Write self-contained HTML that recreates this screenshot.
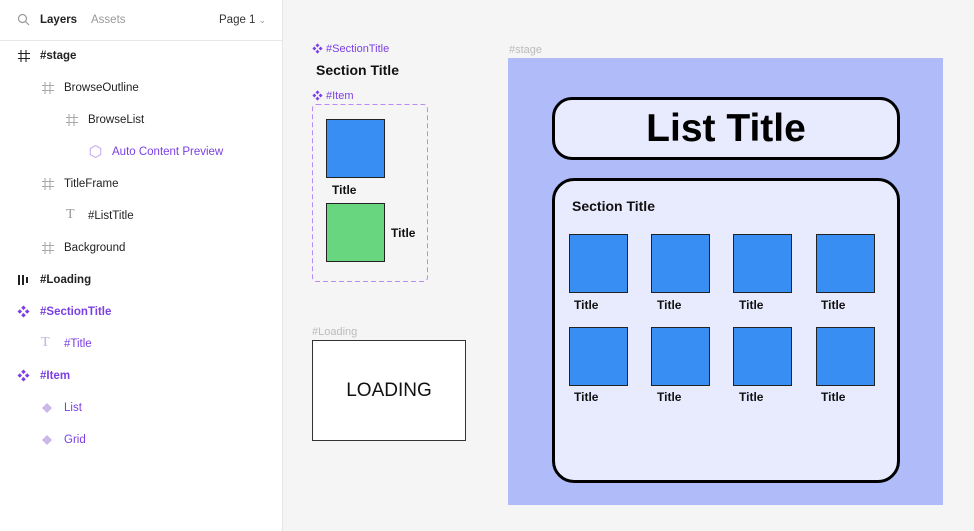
<!DOCTYPE html>
<html><head><style>
*{margin:0;padding:0;box-sizing:border-box}
body{width:974px;height:531px;overflow:hidden;background:#f5f5f5;font-family:"Liberation Sans",sans-serif;position:relative}
.side{position:absolute;left:0;top:0;width:283px;height:531px;background:#fff;border-right:1px solid #e6e6e6}
.hdr{height:41px;border-bottom:1px solid #e6e6e6;position:relative;font-size:11.5px}
.a{position:absolute;white-space:nowrap}
.row{position:absolute;font-size:11.5px;white-space:nowrap;color:#222}
.b{font-weight:bold}
.p{color:#7b3fe4}
.ic{position:absolute;font-size:14px;color:#999}
.sq{position:absolute;width:59px;height:59px;background:#388ef2;border:1px solid #222}
.t{position:absolute;font-size:12px;font-weight:bold;color:#111}
</style></head><body>
<svg width="0" height="0" style="position:absolute"><defs>
<g id="hash"><path d="M4 1v12M9 1v12M1 4.5h12M1 9.5h12" fill="none" stroke-width="1.1"/></g>
<g id="comp"><path d="M6.5 0.5l2.3 2.3-2.3 2.3-2.3-2.3zM6.5 7.9l2.3 2.3-2.3 2.3-2.3-2.3zM2.8 4.2l2.3 2.3-2.3 2.3-2.3-2.3zM10.2 4.2l2.3 2.3-2.3 2.3-2.3-2.3z" fill="#7b3fe4"/></g>
</defs></svg>
<div class="side">
<div class="hdr">
<svg class="a" style="left:17px;top:13px" width="13" height="13" viewBox="0 0 13 13"><circle cx="5.5" cy="5.5" r="4" fill="none" stroke="#999" stroke-width="1.2"/><line x1="8.5" y1="8.5" x2="12" y2="12" stroke="#999" stroke-width="1.2"/></svg>
<span class="a b" style="left:40px;top:14px;color:#222">Layers</span>
<span class="a" style="left:91px;top:14px;color:#999">Assets</span>
<span class="a" style="left:219px;top:14px;color:#333">Page 1 <span style="color:#999;font-size:9px">&#8964;</span></span>
</div>
<svg class="a" style="left:17px;top:49px" width="14" height="14"><use href="#hash" stroke="#222"/></svg><span class="row b" style="left:40px;top:50px">#stage</span>
<svg class="a" style="left:41px;top:81px" width="14" height="14"><use href="#hash" stroke="#aaa"/></svg><span class="row" style="left:64px;top:82px">BrowseOutline</span>
<svg class="a" style="left:65px;top:113px" width="14" height="14"><use href="#hash" stroke="#aaa"/></svg><span class="row" style="left:88px;top:114px">BrowseList</span>
<svg class="a" style="left:89px;top:145px" width="13" height="13" viewBox="0 0 13 13"><polygon points="6.5,0.5 11.7,3.5 11.7,9.5 6.5,12.5 1.3,9.5 1.3,3.5" fill="none" stroke="#c9b5f0" stroke-width="1.2"/></svg>
<span class="row p" style="left:112px;top:146px">Auto Content Preview</span>
<svg class="a" style="left:41px;top:177px" width="14" height="14"><use href="#hash" stroke="#aaa"/></svg><span class="row" style="left:64px;top:178px">TitleFrame</span>
<span class="ic" style="left:66px;top:207px;font-family:'Liberation Serif',serif">T</span><span class="row" style="left:88px;top:210px">#ListTitle</span>
<svg class="a" style="left:41px;top:241px" width="14" height="14"><use href="#hash" stroke="#aaa"/></svg><span class="row" style="left:64px;top:242px">Background</span>
<svg class="a" style="left:18px;top:275px" width="12" height="10"><rect x="0" y="0" width="2" height="10" fill="#222"/><rect x="4" y="0" width="2" height="10" fill="#222"/><rect x="8" y="2" width="2" height="6" fill="#222"/></svg>
<span class="row b" style="left:40px;top:274px">#Loading</span>
<svg class="a" style="left:17px;top:305px" width="13" height="13"><use href="#comp"/></svg><span class="row b p" style="left:40px;top:306px">#SectionTitle</span>
<span class="ic" style="left:41px;top:335px;color:#c0b0e0;font-family:'Liberation Serif',serif">T</span><span class="row p" style="left:64px;top:338px">#Title</span>
<svg class="a" style="left:17px;top:369px" width="13" height="13"><use href="#comp"/></svg><span class="row b p" style="left:40px;top:370px">#Item</span>
<svg class="a" style="left:42px;top:403px" width="10" height="10"><path d="M5 0l5 5-5 5-5-5z" fill="#c9b8e8"/></svg><span class="row p" style="left:64px;top:402px">List</span>
<svg class="a" style="left:42px;top:435px" width="10" height="10"><path d="M5 0l5 5-5 5-5-5z" fill="#c9b8e8"/></svg><span class="row p" style="left:64px;top:434px">Grid</span>
</div>

<svg class="a" style="left:312px;top:43px" width="11" height="11" viewBox="0 0 13 13"><use href="#comp"/></svg><span class="a p" style="left:326px;top:43px;font-size:11px">#SectionTitle</span>
<span class="a b" style="left:316px;top:62px;font-size:14px;color:#111">Section Title</span>
<svg class="a" style="left:312px;top:90px" width="11" height="11" viewBox="0 0 13 13"><use href="#comp"/></svg><span class="a p" style="left:326px;top:90px;font-size:11px">#Item</span>
<svg class="a" style="left:312px;top:104px" width="117" height="179"><rect x="0.5" y="0.5" width="115" height="177" rx="4" fill="none" stroke="#b98cf5" stroke-dasharray="5 3"/></svg>
<div class="sq" style="left:326px;top:119px"></div>
<span class="t" style="left:332px;top:183px">Title</span>
<div class="sq" style="left:326px;top:203px;background:#67d67f"></div>
<span class="t" style="left:391px;top:226px">Title</span>
<span class="a" style="left:312px;top:326px;font-size:11px;color:#bbb">#Loading</span>
<div class="a" style="left:312px;top:340px;width:154px;height:101px;background:#fff;border:1px solid #333;font-size:19px;text-align:center;line-height:99px;color:#111">LOADING</div>

<span class="a" style="left:509px;top:44px;font-size:11px;color:#bbb">#stage</span>
<div class="a" style="left:508px;top:58px;width:435px;height:447px;background:#b0bcf9"></div>
<div class="a" style="left:552px;top:97px;width:348px;height:63px;background:#e8eafd;border:3.5px solid #000;border-radius:20px;text-align:center;font-size:39px;font-weight:bold;line-height:58px;color:#000">List Title</div>
<div class="a" style="left:552px;top:178px;width:348px;height:305px;background:#e8eafd;border:3.5px solid #000;border-radius:22px"></div>
<span class="a b" style="left:572px;top:198px;font-size:14px;color:#111">Section Title</span>
<div class="sq" style="left:569px;top:234px"></div><div class="sq" style="left:651px;top:234px"></div><div class="sq" style="left:733px;top:234px"></div><div class="sq" style="left:816px;top:234px"></div>
<span class="t" style="left:574px;top:298px">Title</span><span class="t" style="left:657px;top:298px">Title</span><span class="t" style="left:739px;top:298px">Title</span><span class="t" style="left:821px;top:298px">Title</span>
<div class="sq" style="left:569px;top:327px"></div><div class="sq" style="left:651px;top:327px"></div><div class="sq" style="left:733px;top:327px"></div><div class="sq" style="left:816px;top:327px"></div>
<span class="t" style="left:574px;top:390px">Title</span><span class="t" style="left:657px;top:390px">Title</span><span class="t" style="left:739px;top:390px">Title</span><span class="t" style="left:821px;top:390px">Title</span>
</body></html>
